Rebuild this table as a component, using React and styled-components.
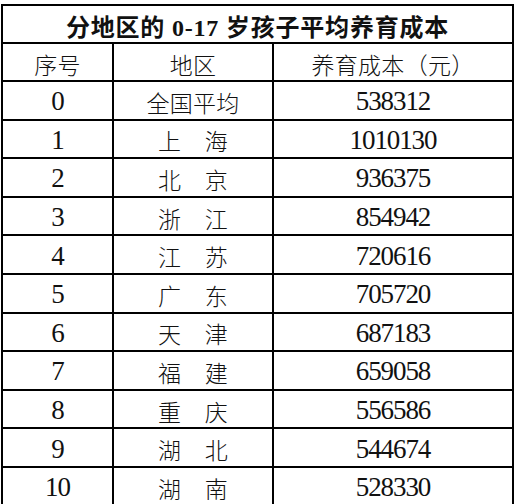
import React from 'react';
import styled, { createGlobalStyle } from 'styled-components';

const GlobalStyle = createGlobalStyle`
  html, body {
    margin: 0;
    padding: 0;
    background: #fff;
  }
  body {
    font-family: "Liberation Serif", "Noto Sans CJK SC", serif;
    color: #111;
  }
`;

const Page = styled.div`
  padding: 4px 0 0 1px;
  width: 516px;
  height: 504px;
  overflow: hidden;
  box-sizing: border-box;
`;

const Table = styled.div`
  display: grid;
  grid-template-columns: 109px 158px 238px;
  grid-auto-rows: 36.6px;
  grid-template-rows: 36px 36px;
  gap: 2px;
  padding: 2px;
  width: max-content;
  background: #000;
`;

const Title = styled.div`
  grid-column: 1 / -1;
  background: #fff;
  display: flex;
  align-items: center;
  justify-content: center;
  font-size: 24px;
  font-weight: 700;
  letter-spacing: 0.8px;
  padding-top: 2px;
`;

const Cell = styled.div`
  background: #fff;
  display: flex;
  align-items: center;
  justify-content: center;
  padding-top: 3px;
  font-size: ${p => (p.$num ? '27px' : '23px')};
  font-weight: ${p => (p.$num ? 400 : 300)};
  letter-spacing: ${p => (p.$num ? '-1.1px' : '0.3px')};
  white-space: pre;
`;

const rows = [
  ['0', '全国平均', '538312'],
  ['1', '上　海', '1010130'],
  ['2', '北　京', '936375'],
  ['3', '浙　江', '854942'],
  ['4', '江　苏', '720616'],
  ['5', '广　东', '705720'],
  ['6', '天　津', '687183'],
  ['7', '福　建', '659058'],
  ['8', '重　庆', '556586'],
  ['9', '湖　北', '544674'],
  ['10', '湖　南', '528330'],
];

export default function App() {
  return (
    <Page>
      <GlobalStyle />
      <Table>
        <Title>分地区的 0-17 岁孩子平均养育成本</Title>
        <Cell>序号</Cell>
        <Cell>地区</Cell>
        <Cell>养育成本（元）</Cell>
        {rows.map(([no, region, cost]) => (
          <React.Fragment key={no}>
            <Cell $num>{no}</Cell>
            <Cell>{region}</Cell>
            <Cell $num>{cost}</Cell>
          </React.Fragment>
        ))}
      </Table>
    </Page>
  );
}
